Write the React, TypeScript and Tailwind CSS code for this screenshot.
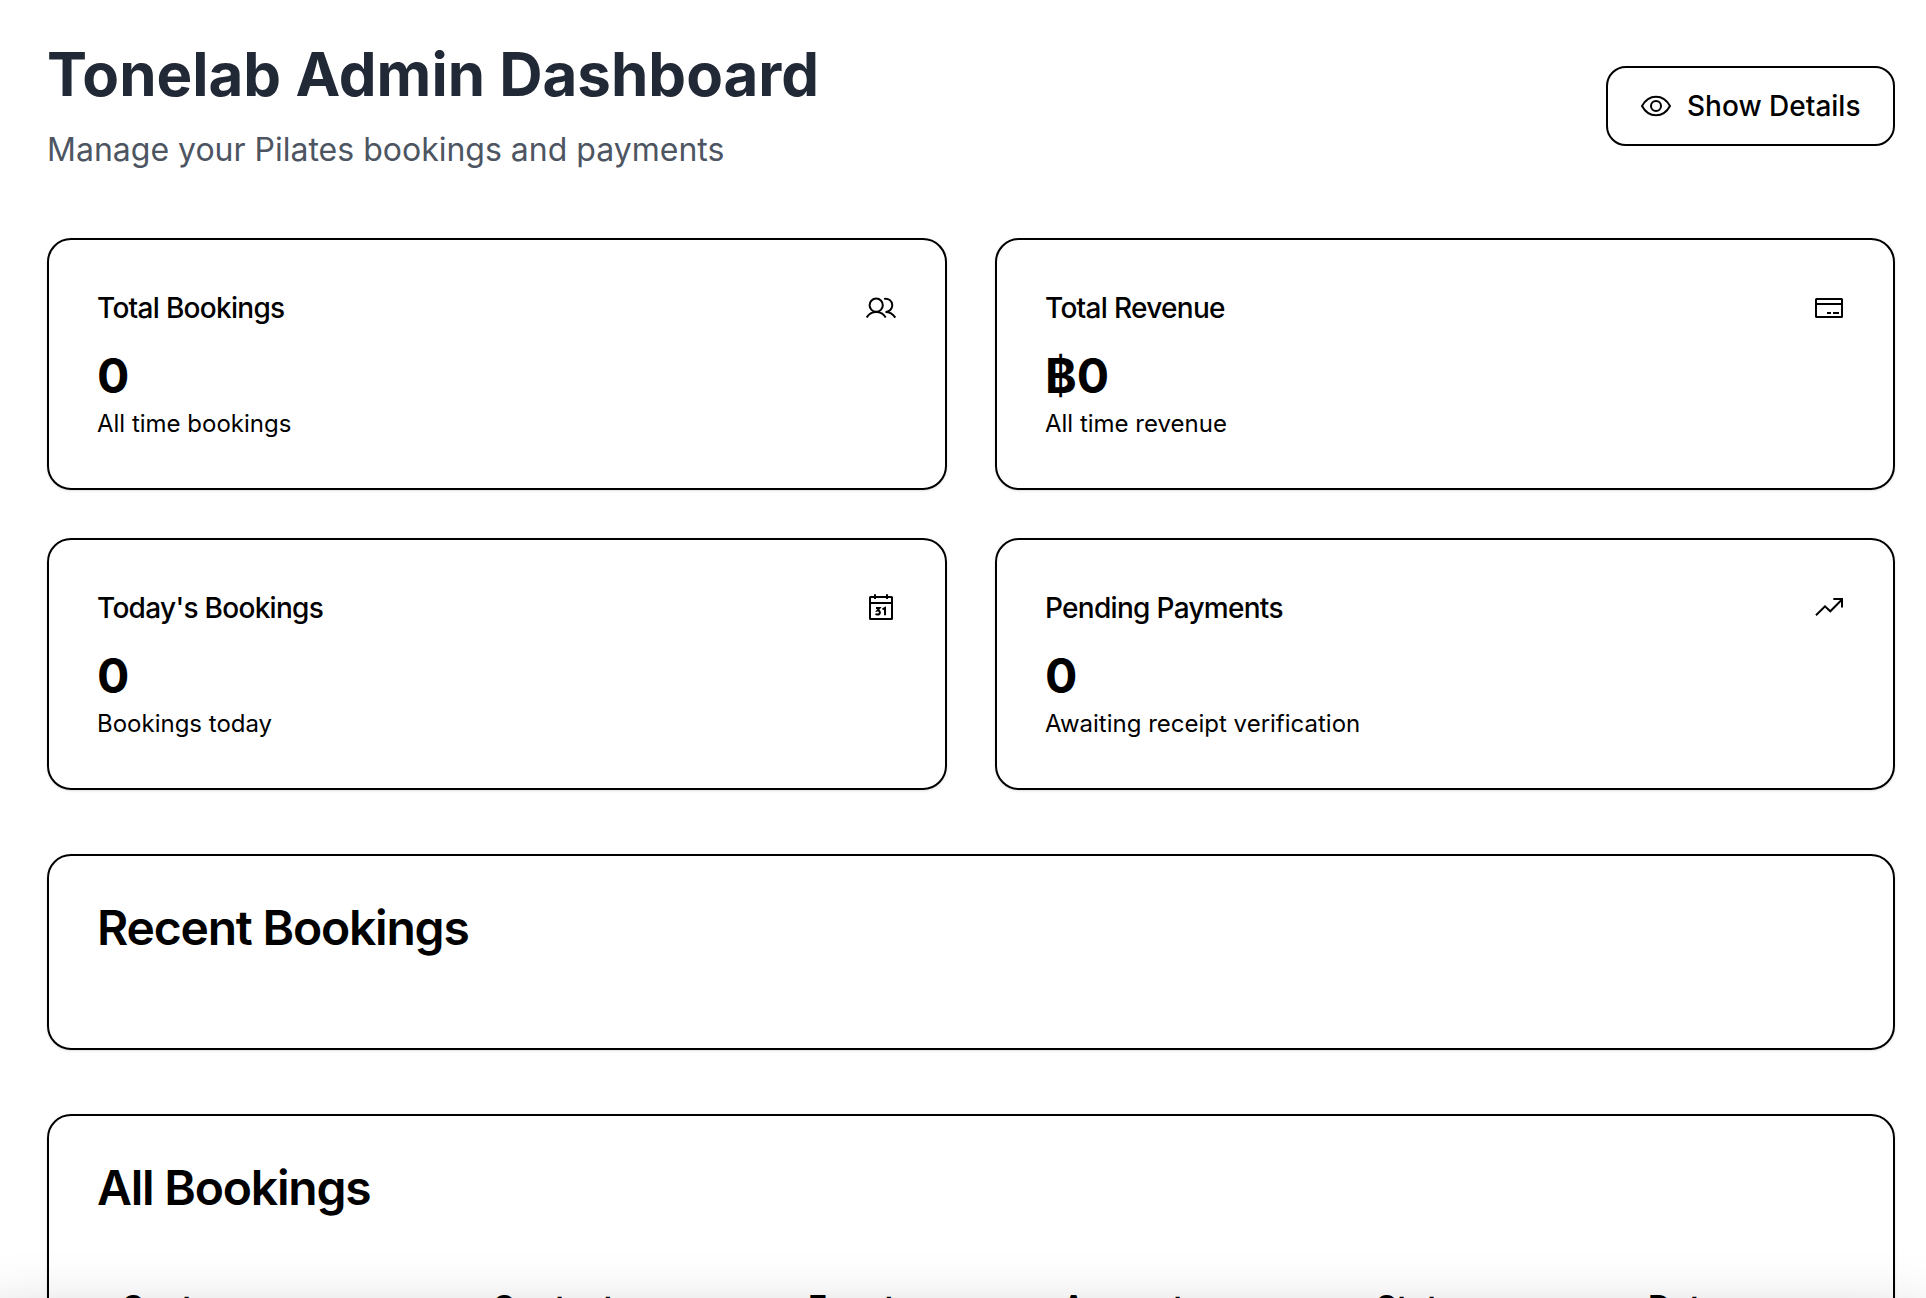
import type { ReactNode } from "react";

function Icon({ children }: { children: ReactNode }) {
  return (
    <svg
      viewBox="0 0 32 32"
      className="h-8 w-8 shrink-0"
      fill="none"
      stroke="currentColor"
      strokeWidth="2"
      aria-hidden="true"
    >
      {children}
    </svg>
  );
}

function EyeIcon() {
  return (
    <Icon>
      <path d="M2 16C5.500 9.500 10 6.700 16 6.700s10.500 2.800 14 9.300C26.500 22.500 22 25.300 16 25.300S5.500 22.500 2 16Z" />
      <circle cx="16" cy="16" r="5" />
    </Icon>
  );
}

function UsersIcon() {
  return (
    <Icon>
      <circle cx="11.200" cy="13.200" r="6.600" />
      <path d="M1.700 25.600c2-3.500 5.500-5.600 9.500-5.600s7.500 2 9.500 5.600" />
      <path d="M19 6.900c4.300-1 8.300 2 8.300 6.300 0 3.800-3 6.700-6.800 6.800 4 0 7.500 2 9.800 5.600" />
    </Icon>
  );
}

function CardIcon() {
  return (
    <Icon>
      <rect x="3" y="7" width="26" height="18" rx="0.500" />
      <path d="M3 12h26M14 21h4M20 21h6" />
    </Icon>
  );
}

function CalendarIcon() {
  return (
    <Icon>
      <rect x="5" y="5" width="22" height="22" rx="0.500" />
      <path d="M5 11h22M10 2.300V7M22 2.300V7" />
      <path d="M11 16h3.500L12.400 18.600c3.400-.4 3.100 4 .2 4-1 0-1.600-.4-1.900-1M17.500 17.400l2.500-1.400v7.300" />
    </Icon>
  );
}

function TrendIcon() {
  return (
    <Icon>
      <path d="M3 23.300l9-9 5.300 5L29 7.500M20.300 7H29v8.500" />
    </Icon>
  );
}

const stats = [
  { title: "Total Bookings", value: "0", note: "All time bookings", icon: <UsersIcon /> },
  { title: "Total Revenue", value: "฿0", note: "All time revenue", icon: <CardIcon /> },
  { title: "Today's Bookings", value: "0", note: "Bookings today", icon: <CalendarIcon /> },
  { title: "Pending Payments", value: "0", note: "Awaiting receipt verification", icon: <TrendIcon /> },
];

const columns = ["Customer", "Contact", "Event", "Amount", "Status", "Date"];

export default function App() {
  return (
    <div className="relative h-[1298px] overflow-hidden bg-white pr-[31px] pl-[47px] font-['Inter',sans-serif] text-black">
      <header className="flex h-[238px] justify-between">
        <div className="pt-[38px]">
          <h1 className="text-[60px] leading-[72px] font-bold text-[#222936]">Tonelab Admin Dashboard</h1>
          <p className="mt-4 text-[32px] leading-[48px] text-[#4d5562]">Manage your Pilates bookings and payments</p>
        </div>
        <button className="mt-[66px] flex h-20 w-[289px] items-center gap-[15px] rounded-[20px] border-2 border-black pl-8 text-[28px] font-medium">
          <EyeIcon />
          <span className="whitespace-nowrap">Show Details</span>
        </button>
      </header>

      <section className="grid grid-cols-2 gap-12">
        {stats.map((s) => (
          <article key={s.title} className="h-[252px] rounded-[24px] border-2 border-black px-12 pt-12 shadow-sm">
            <div className="flex h-10 items-center justify-between">
              <h3 className="text-[28px] leading-10 font-medium tracking-tight">{s.title}</h3>
              {s.icon}
            </div>
            <div className="mt-5 text-[48px] leading-[56px] font-bold">{s.value}</div>
            <p className="text-[24px] leading-10">{s.note}</p>
          </article>
        ))}
      </section>

      <section className="mt-16 h-[196px] rounded-[24px] border-2 border-black px-12 pt-12 shadow-sm">
        <h2 className="text-[48px] leading-[48px] font-semibold tracking-tight">Recent Bookings</h2>
      </section>

      <section className="mt-16 h-[400px] rounded-[24px] border-2 border-black px-12 pt-12 shadow-sm">
        <h2 className="text-[48px] leading-[48px] font-semibold tracking-tight">All Bookings</h2>
        <div className="mt-[72px] grid grid-cols-[371px_316px_254px_314px_272px_auto] pl-6 text-[32px] leading-[48px] font-semibold">
          {columns.map((c) => (
            <div key={c}>{c}</div>
          ))}
        </div>
      </section>

      <div className="pointer-events-none absolute -right-0 top-[1330px] -left-5 h-40 shadow-[0_0_70px_rgba(0,0,0,0.34)]" />
    </div>
  );
}
